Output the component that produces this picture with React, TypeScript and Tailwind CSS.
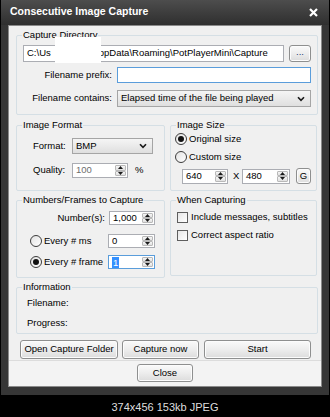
import type { ReactNode } from 'react'

function Group({ title, className, inner, children }: { title: string; className: string; inner: string; children?: ReactNode }) {
  return (
    <div className={`flex flex-col rounded-[2px] border border-[#d5dfe5] ${className}`}>
      <span className="-mt-[7px] ml-[5px] block h-[12px] w-fit whitespace-nowrap bg-[#f0f0f0] px-[1px] leading-[12px]">{title}</span>
      <div className={`flex flex-col ${inner}`}>{children}</div>
    </div>
  )
}

function Button({ children, className }: { children: ReactNode; className: string }) {
  return (
    <div
      className={`flex items-center justify-center rounded-[3px] border border-[#8e8f8f] bg-gradient-to-b from-[#fafafa] via-[#ededed] to-[#dcdcdc] shadow-[inset_0_0_0_1px_#fcfcfc] ${className}`}
    >
      {children}
    </div>
  )
}

function Chevron() {
  return (
    <svg width="8" height="6" viewBox="0 0 8 6">
      <path d="M1 1.2 L4 4.4 L7 1.2" fill="none" stroke="#1a1a1a" strokeWidth="1.6" />
    </svg>
  )
}

function Select({ text, className }: { text: string; className: string }) {
  return (
    <div
      className={`flex items-center justify-between border border-[#a5a5a5] bg-gradient-to-b from-[#f5f5f5] to-[#dfdfdf] pl-[3px] pr-[5px] ${className}`}
    >
      <span>{text}</span>
      <Chevron />
    </div>
  )
}

function Arrow({ up }: { up?: boolean }) {
  return (
    <div className="flex flex-1 items-center justify-center rounded-[1px] border border-[#b9b9b9] bg-gradient-to-b from-[#f6f6f6] to-[#e1e1e1]">
      <svg width="5" height="3" viewBox="0 0 5 3">
        <path d={up ? 'M0 3 L2.5 0 L5 3 Z' : 'M0 0 L2.5 3 L5 0 Z'} fill="#1a1a1a" />
      </svg>
    </div>
  )
}

function Spin({ value, className, focused, selected }: { value: string; className: string; focused?: boolean; selected?: boolean }) {
  return (
    <div className={`flex items-stretch border bg-white ${focused ? 'border-[#5a9ddb]' : 'border-[#abadb3]'} ${className}`}>
      <div className="flex flex-1 items-center pl-[3px]">
        {selected ? <span className="bg-[#3390ff] px-[1px] leading-[11px] text-white">{value}</span> : <span>{value}</span>}
      </div>
      <div className="flex w-[12px] flex-col py-[1px] pr-[1px]">
        <Arrow up />
        <Arrow />
      </div>
    </div>
  )
}

function Radio({ checked }: { checked?: boolean }) {
  return (
    <span className="flex h-[12px] w-[12px] shrink-0 items-center justify-center rounded-full border border-[#3c3c3c] bg-gradient-to-br from-[#e2e2e2] to-white">
      {checked && <span className="h-[6px] w-[6px] rounded-full bg-[#111]" />}
    </span>
  )
}

function Check() {
  return <span className="h-[11px] w-[11px] shrink-0 border border-[#5e5e5e] bg-gradient-to-br from-[#e6e6e6] to-white" />
}

export default function App() {
  return (
    <div className="flex h-[417px] w-[330px] flex-col bg-black font-['Liberation_Sans',Arial,sans-serif] text-[9.5px] text-black">
      <div className="flex h-[395px] w-[329px] flex-col border-l border-black bg-[#363636]">
        <div className="flex h-[25px] shrink-0 items-center justify-between bg-gradient-to-b from-[#4d4d4d] to-[#2f2f2f] pb-[1px] pl-[9px] pr-[11px]">
          <span className="text-[10.5px] font-bold text-white">Consecutive Image Capture</span>
          <svg width="9" height="9" viewBox="0 0 9 9">
            <path d="M1 1 L8 8 M8 1 L1 8" stroke="#fff" strokeWidth="2.2" />
          </svg>
        </div>

        <div className="mx-[7px] flex h-[362px] flex-col border border-[#8a8a8a] bg-[#f0f0f0]">
          <div className="flex h-[334px] flex-col pl-[7px] pr-[3px] pt-[9px]">
            <Group title="Capture Directory" className="relative h-[80px]" inner="px-[6px]">
              <div className="mt-[4px] flex h-[17px] gap-[5px]">
                <div className="flex flex-1 items-center border border-[#abadb3] bg-white pl-[3px]">
                  <span>C:\Us</span>
                  <span className="ml-[48px]">ppData\Roaming\PotPlayerMini\Capture</span>
                </div>
                <Button className="w-[22px] pb-[3px] text-[#1c3a6e]">...</Button>
              </div>
              <div className="mt-[5px] flex h-[16px] items-center gap-[5px]">
                <span className="w-[89px] text-right">Filename prefix:</span>
                <div className="h-full flex-1 border border-[#5a9ddb] bg-white" />
              </div>
              <div className="mt-[7px] flex h-[17px] items-center gap-[5px]">
                <span className="w-[89px] text-right">Filename contains:</span>
                <Select text="Elapsed time of the file being played" className="h-full flex-1" />
              </div>
              <div className="absolute left-[38px] top-[1px] h-[26px] w-[46px] bg-white" />
            </Group>

            <div className="mt-[10px] flex gap-[5px]">
              <Group title="Image Format" className="h-[66px] w-[149px]" inner="pl-[16px]">
                <div className="mt-[7px] flex h-[16px] items-center">
                  <span className="w-[39px]">Format:</span>
                  <Select text="BMP" className="h-full w-[81px]" />
                </div>
                <div className="mt-[9px] flex h-[15px] items-center">
                  <span className="w-[39px]">Quality:</span>
                  <Spin value="100" className="h-full w-[56px] text-[#6d6d6d]" />
                  <span className="ml-[7px]">%</span>
                </div>
              </Group>
              <Group title="Image Size" className="h-[66px] w-[147px]" inner="pl-[4px]">
                <div className="mt-[1px] flex h-[14px] items-center gap-[2px]">
                  <Radio checked />
                  <span>Original size</span>
                </div>
                <div className="mt-[4px] flex h-[14px] items-center gap-[2px]">
                  <Radio />
                  <span>Custom size</span>
                </div>
                <div className="ml-[7px] mt-[4px] flex h-[16px] items-center">
                  <Spin value="640" className="h-[15px] w-[46px]" />
                  <span className="ml-[5px] w-[9px]">X</span>
                  <Spin value="480" className="h-[15px] w-[48px]" />
                  <Button className="ml-[6px] h-[16px] w-[15px]">G</Button>
                </div>
              </Group>
            </div>

            <div className="mt-[9px] flex items-start gap-[5px]">
              <Group title="Numbers/Frames to Capture" className="h-[78px] w-[149px]" inner="pl-[13px] pr-[9px]">
                <div className="mt-[5px] flex h-[14px] items-center justify-end gap-[4px]">
                  <span>Number(s):</span>
                  <Spin value="1,000" className="h-full w-[46px]" />
                </div>
                <div className="mt-[9px] flex h-[14px] items-center gap-[2px]">
                  <Radio />
                  <span>Every # ms</span>
                  <Spin value="0" className="ml-auto h-full w-[47px]" />
                </div>
                <div className="mt-[7px] flex h-[14px] items-center gap-[2px]">
                  <Radio checked />
                  <span>Every # frame</span>
                  <Spin value="1" focused selected className="ml-auto h-full w-[47px]" />
                </div>
              </Group>
              <Group title="When Capturing" className="h-[76px] w-[147px]" inner="pl-[6px]">
                <div className="mt-[5px] flex h-[13px] items-center gap-[3px]">
                  <Check />
                  <span>Include messages, subtitles</span>
                </div>
                <div className="mt-[5px] flex h-[13px] items-center gap-[3px]">
                  <Check />
                  <span>Correct aspect ratio</span>
                </div>
              </Group>
            </div>

            <Group title="Information" className="mt-[9px] h-[47px]" inner="pl-[10px]">
              <div className="mt-[4px] flex h-[12px] items-center">Filename:</div>
              <div className="mt-[8px] flex h-[12px] items-center">Progress:</div>
            </Group>

            <div className="ml-[4px] mt-[6px] flex h-[19px] gap-[4px]">
              <Button className="w-[98px]">Open Capture Folder</Button>
              <Button className="w-[77px]">Capture now</Button>
              <Button className="ml-[1px] w-[107px]">Start</Button>
            </div>
          </div>
          <div className="flex flex-1 border-t border-[#dcdcdc] bg-[#f3f3f3] pt-[3px]">
            <Button className="ml-[128px] h-[18px] w-[56px]">Close</Button>
          </div>
        </div>
      </div>
      <div className="flex flex-1 items-center justify-center pt-[3px] text-[11px] text-[#dedede]">374x456 153kb JPEG</div>
    </div>
  )
}
